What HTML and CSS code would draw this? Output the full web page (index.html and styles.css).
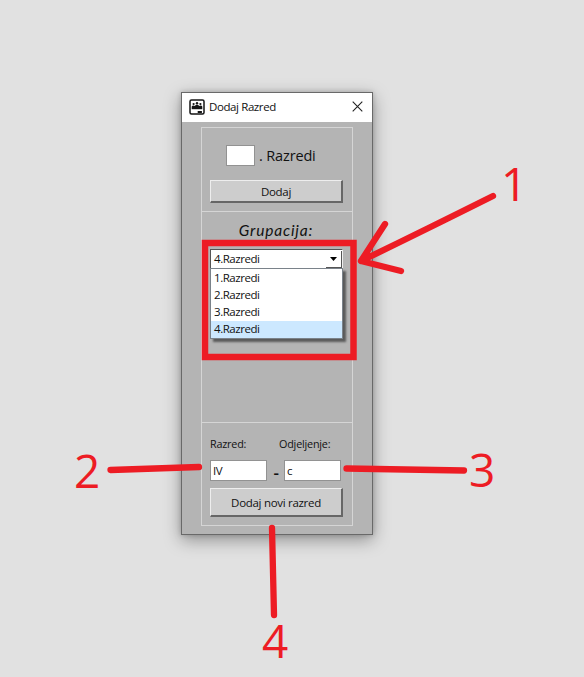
FILE: index.html
```html
<!DOCTYPE html>
<html lang="hr">
<head>
<meta charset="utf-8">
<title>Dodaj Razred</title>
<link rel="stylesheet" href="styles.css">
</head>
<body>
<main class="window">
  <header class="titlebar">
    <svg class="app-icon" viewBox="0 0 16 16">
      <rect x="1" y="1" width="14" height="14" rx="1.5" fill="#fff" stroke="#151515" stroke-width="1.5"/>
      <g fill="#151515">
        <circle cx="4.6" cy="5" r="1.1"/><circle cx="8" cy="4.2" r="1.2"/><circle cx="11.4" cy="5" r="1.1"/>
        <path d="M2.7 9V7.5Q3 6.4 4.6 6.4L6 7Q6.2 5.800 8 5.800T10 7L11.4 6.400Q13 6.400 13.300 7.500V9Z"/>
        <rect x="2.7" y="9" width="10.6" height="1.2"/><rect x="8.7" y="12" width="4.2" height="2"/>
      </g>
    </svg>
    <span class="title">Dodaj Razred</span>
    <svg class="close" viewBox="0 0 11 11"><path d="M.7.7L10.3 10.3M10.3.7L.7 10.3" stroke="#222" stroke-width="1.1"/></svg>
  </header>
  <div class="frame">
    <section class="add">
      <div class="add-row"><span class="field small"></span><span class="add-label">. Razredi</span></div>
      <button class="btn short">Dodaj</button>
    </section>
    <section class="group">
      <h2>Grupacija:</h2>
      <div class="combo"><span>4.Razredi</span><i class="drop"><svg viewBox="0 0 7 4"><path d="M0 0H7L3.5 4Z"/></svg></i>
        <ul class="menu">
          <li>1.Razredi</li><li>2.Razredi</li><li>3.Razredi</li><li class="selected">4.Razredi</li>
        </ul>
      </div>
    </section>
    <section class="new">
      <div class="grid">
        <span class="lbl">Razred:</span><span></span><span class="lbl second">Odjeljenje:</span>
        <span class="field">IV</span><span class="dash">-</span><span class="field">c</span>
      </div>
      <button class="btn tall">Dodaj novi razred</button>
    </section>
  </div>
</main>
<svg class="notes" viewBox="0 0 584 677">
  <rect x="205" y="243" width="148.500" height="114" stroke-width="6.5"/>
  <path d="M493 196Q423 231 361 261M385 224L361 261L401 271" stroke-width="6.3"/>
  <path d="M110.5 470L199 467" stroke-width="6.3"/>
  <path d="M346.5 468.5L464 470.5" stroke-width="6.3"/>
  <path d="M272 528L274 615" stroke-width="6.3"/>
  <g class="numbers">
    <text x="501" y="201">1</text>
    <text x="74" y="488">2</text>
    <text x="469" y="487">3</text>
    <text x="262" y="658">4</text>
  </g>
</svg>
</body>
</html>
```
FILE: styles.css
```css
* { box-sizing: border-box; }
html, body { height: 100%; }
body {
  margin: 0;
  padding: 92px 0 0 181px;
  position: relative;
  overflow: hidden;
  background: #e1e1e1;
  color: #111;
  font: 11.5px/16px "Open Sans", "Noto Sans", sans-serif;
  letter-spacing: -.45px;
}
.window {
  width: 192px;
  height: 443px;
  border: 1px solid #696969;
  background: #b4b4b4;
  box-shadow: 0 5px 16px rgba(0, 0, 0, .36), 0 0 5px rgba(0, 0, 0, .18);
}
.titlebar {
  height: 29px;
  padding: 0 9px 1px 7px;
  display: flex;
  align-items: center;
  background: #fff;
}
.app-icon { width: 16px; height: 16px; }
.title { margin-left: 4px; flex: 1; letter-spacing: -.4px; }
.close { width: 11px; height: 11px; margin-top: -1px; }
.frame {
  width: 152px;
  height: 399px;
  margin: 5px 0 0 19px;
  border: 1px solid #d5d5d5;
  display: flex;
  flex-direction: column;
}
.add { height: 84px; padding: 17px 8px 0; border-bottom: 1px solid #d5d5d5; }
.add-row { display: flex; height: 21px; padding-left: 16px; }
.field {
  height: 21px;
  width: 57px;
  padding: 2px 2px 0;
  border: 1px solid #929292;
  background: #fff;
}
.small { width: 29px; }
.add-label { margin: 2px 0 0 4px; font-size: 14.5px; line-height: 18px; letter-spacing: -.15px; }
.btn {
  display: block;
  width: 133px;
  padding: 0;
  border: solid;
  border-width: 1px 2px 2px 1px;
  border-color: #eee #666 #666 #eee;
  background: #cdcdcd;
  color: #111;
  font: inherit;
  letter-spacing: -.3px;
}
.short { height: 23px; margin-top: 14px; padding-top: 1px; }
.tall { height: 29px; margin-top: 7px; padding-top: 1px; }
.group { height: 211px; padding: 8px 8px 0; border-bottom: 1px solid #d5d5d5; }
h2 {
  margin: 0;
  height: 29px;
  padding-right: 2px;
  text-align: center;
  font: italic 400 15.5px/21px Lato, sans-serif;
  letter-spacing: .85px;
}
.combo {
  position: relative;
  width: 133px;
  height: 21px;
  display: flex;
  justify-content: space-between;
  padding: 1px 0 0 3px;
  border: 1px solid;
  border-color: #555 #eee #eee #555;
  background: #fff;
}
.drop {
  width: 16px;
  height: 17px;
  padding: 6px 0 0 4px;
  border-right: 1px solid #555;
  border-bottom: 1px solid #555;
}
.drop svg { display: block; width: 7px; height: 4px; }
.menu {
  position: absolute;
  left: -1px;
  top: 18px;
  width: 133px;
  margin: 0;
  padding: 1px 0 0;
  list-style: none;
  border: 1px solid #7a828a;
  background: #fff;
  box-shadow: 3px 3px 2px rgba(0, 0, 0, .5);
}
.menu li { height: 17px; padding-left: 3px; }
.selected { background: #cce8ff; }
.new { padding: 13px 8px 0; }
.grid { display: grid; grid-template-columns: 57px 17px 57px; row-gap: 8px; }
.lbl { height: 16px; font-size: 10.8px; letter-spacing: -.2px; white-space: nowrap; }
.second { margin-left: -5px; }
.dash { padding: 5px 0 0 1px; text-align: center; font-size: 17px; font-weight: 600; }
.notes {
  position: absolute;
  left: 0;
  top: 0;
  width: 584px;
  height: 677px;
  fill: none;
  stroke: #ed1c24;
  stroke-linecap: round;
  stroke-linejoin: round;
}
.notes rect { stroke-linejoin: miter; }
.numbers { fill: #ed1c24; stroke: none; font: 46px "Open Sans", sans-serif; letter-spacing: 0; }
```
